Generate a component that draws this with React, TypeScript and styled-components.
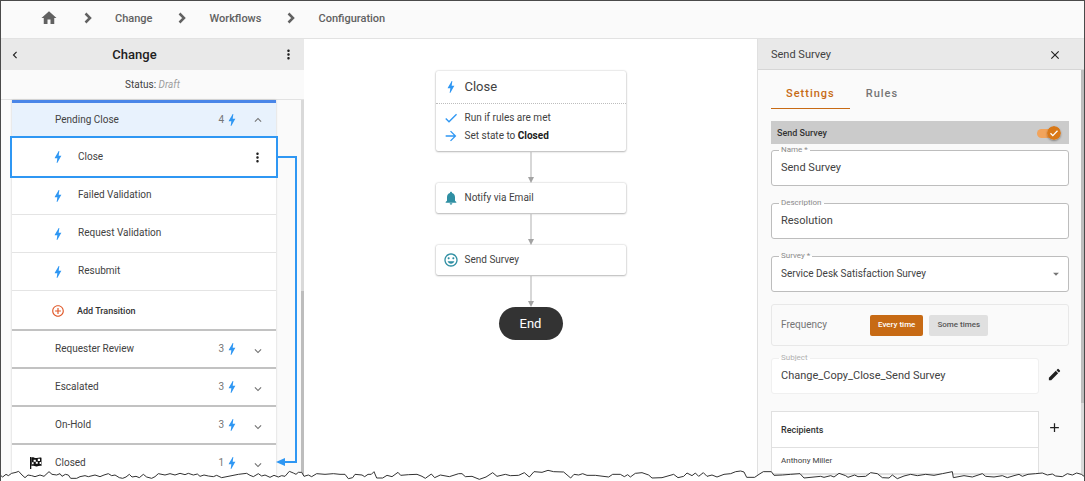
import React, { useState } from "react";
import styled, { createGlobalStyle, css } from "styled-components";
import {
  MdAdd,
  MdArrowDropDown,
  MdArrowForward,
  MdBolt,
  MdCheck,
  MdChevronLeft,
  MdClose,
  MdControlPoint,
  MdEdit,
  MdHome,
  MdKeyboardArrowDown,
  MdKeyboardArrowUp,
  MdMoreVert,
  MdNotifications,
  MdOutlineMood,
} from "react-icons/md";

const blue = "#2f97f3";
const orange = "#c76a14";

const GlobalStyle = createGlobalStyle`
  *, *::before, *::after { box-sizing: border-box; }
  body {
    margin: 0;
    background: #fff;
    color: #424242;
    font-family: Roboto, "Liberation Sans", sans-serif;
    font-size: 10px;
    line-height: 16px;
  }
  button, input, select { font: inherit; color: inherit; }
  button { cursor: pointer; }
  svg { display: block; flex: none; }
`;

/* ---------- shell ---------- */

const Shell = styled.div`
  position: relative;
  display: flex;
  flex-direction: column;
  height: 100vh;
  overflow: hidden;
  border: 1px solid #4a4a4a;
  border-bottom: 0;
`;

const TopBar = styled.nav`
  flex: none;
  height: 38px;
  padding: 0 0 1px 39px;
  background: #fafafa;
  border-bottom: 1px solid #e2e2e2;
`;

const Crumbs = styled.ol`
  display: flex;
  align-items: center;
  height: 100%;
  margin: 0;
  padding: 0;
  list-style: none;
`;

const Crumb = styled.li`
  display: flex;
  align-items: center;
`;

const CrumbLink = styled.a`
  color: #616161;
  font-size: 11px;
  font-weight: 500;
  text-decoration: none;

  svg { margin-bottom: 3px; }
`;

const CrumbSep = styled.svg`
  margin: 0 23px 3px 26px;
`;

const Columns = styled.main`
  flex: 1;
  display: grid;
  grid-template-columns: 303px minmax(0, 1fr) 327px;
  min-height: 0;
`;

const IconButton = styled.button`
  display: flex;
  align-items: center;
  justify-content: center;
  width: 20px;
  height: 20px;
  padding: 0;
  border: 0;
  background: none;
  color: #212121;
`;

/* ---------- left panel ---------- */

const Sidebar = styled.aside`
  display: flex;
  flex-direction: column;
  min-height: 0;
  background: #fafafa;
`;

const SidebarHeader = styled.header`
  flex: none;
  display: flex;
  align-items: center;
  height: 31px;
  padding: 0 6px 0 4px;
  background: #e9e9e9;
`;

const SidebarTitle = styled.h1`
  flex: 1;
  margin: 0;
  padding-right: 34px;
  color: #212121;
  font-size: 13px;
  font-weight: 500;
  text-align: center;
`;

const StatusLine = styled.p`
  flex: none;
  height: 30px;
  margin: 0;
  border-bottom: 1px solid #e2e2e2;
  line-height: 29px;
  text-align: center;

  em { color: #9e9e9e; }
`;

const ListArea = styled.div`
  position: relative;
  flex: 1;
  min-height: 0;
  padding: 0 28px 0 11px;
`;

const StateList = styled.div`
  position: relative;
  background: #fff;
  box-shadow: 0 0 2px rgba(0, 0, 0, 0.2);
`;

const ScrollTrack = styled.div<{ $start: string; $size: string }>`
  position: absolute;
  top: 0;
  right: 0;
  bottom: 0;
  width: 3px;
  background: #d9d9d9;

  &::after {
    content: "";
    position: absolute;
    top: ${(p) => p.$start};
    right: 0;
    width: 3px;
    height: ${(p) => p.$size};
    background: #bdbdbd;
  }
`;

const StateRow = styled.div<{ $open?: boolean }>`
  display: flex;
  align-items: center;
  height: 38px;
  padding: 0 8px 0 43px;
  border-top: 2px solid #c2c2c2;
  ${(p) =>
    p.$open &&
    css`
      height: 36px;
      border-top: 3px solid #4a86e8;
      background: #e8f2fd;
    `}
`;

const StateName = styled.span`
  flex: 1;
`;

const FlagSlot = styled.span`
  width: 26px;
  margin-left: -26px;
`;

const TransitionCount = styled.span`
  display: flex;
  align-items: center;
  margin-right: 8px;
  color: #757575;

  svg { color: ${blue}; }
`;

const Toggle = styled(IconButton)<{ $closed?: boolean }>`
  padding-top: ${(p) => (p.$closed ? 3 : 0)}px;
  color: #757575;
`;

const TransitionRow = styled.div<{ $selected?: boolean }>`
  display: flex;
  align-items: center;
  gap: 12px;
  height: 38px;
  padding: 0 9px 0 38px;
  border-bottom: 1px solid #e4e4e4;

  > svg { color: ${blue}; }

  ${(p) =>
    p.$selected &&
    css`
      height: 42px;
      margin: 0 -2px -1px;
      border: 2px solid ${blue};
    `}
`;

const TransitionName = styled.span`
  flex: 1;
  padding-bottom: 1px;
`;

const AddTransition = styled.button`
  display: flex;
  align-items: center;
  gap: 12px;
  width: 100%;
  height: 38px;
  padding: 2px 0 0 39px;
  border: 0;
  background: none;
  color: #333;
  font-size: 9px;
  font-weight: 500;

  svg { color: #e0592a; }
`;

const Connector = styled.div`
  position: absolute;
  top: 56px;
  bottom: 18px;
  left: calc(100% + 2px);
  width: 19px;
  border: 2px solid ${blue};
  border-left: 0;
  z-index: 1;
`;

const ConnectorHead = styled.svg`
  position: absolute;
  bottom: -6px;
  left: -2px;
`;

/* ---------- canvas ---------- */

const Canvas = styled.section`
  display: flex;
  flex-direction: column;
  align-items: center;
  padding-top: 32px;
  background: #fff;
`;

const Card = styled.article`
  width: 190px;
  border-radius: 2px;
  background: #fff;
  box-shadow: 0 0 2px rgba(0, 0, 0, 0.25), 0 1px 2px rgba(0, 0, 0, 0.22);
`;

const CardTitle = styled.h2`
  display: flex;
  align-items: center;
  gap: 6px;
  height: 33px;
  margin: 0;
  padding-left: 7px;
  border-bottom: 1px dotted #bdbdbd;
  font-size: 13px;
  font-weight: 400;

  svg { color: ${blue}; }
`;

const CardBody = styled.div`
  padding: 5px 0 6px;
`;

const CardLine = styled.div<{ $tone: string; $tall?: boolean }>`
  display: flex;
  align-items: center;
  gap: 6px;
  height: ${(p) => (p.$tall ? 30 : 18)}px;
  padding-left: 7px;

  svg { color: ${(p) => p.$tone}; }
  strong { color: #212121; font-weight: 700; }
`;

const FlowArrow = styled.svg`
  margin-top: 1px;
`;

const EndNode = styled.div`
  width: 64px;
  height: 33px;
  border-radius: 17px;
  background: #333;
  color: #fff;
  font-size: 13px;
  line-height: 33px;
  text-align: center;
`;

/* ---------- right panel ---------- */

const Inspector = styled.aside`
  position: relative;
  display: flex;
  flex-direction: column;
  min-height: 0;
  border-left: 1px solid #e0e0e0;
  background: #fafafa;
`;

const InspectorHeader = styled.header`
  flex: none;
  display: flex;
  align-items: center;
  justify-content: space-between;
  height: 31px;
  padding: 1px 19px 0 13px;
  border-bottom: 1px solid #d6d6d6;
  background: #e9e9e9;
`;

const InspectorTitle = styled.h2`
  margin: 0;
  font-size: 11px;
  font-weight: 400;
`;

const InspectorBody = styled.form`
  position: relative;
  flex: 1;
  min-height: 0;
  padding: 8px 15px 0 13px;
`;

const Tabs = styled.div`
  display: flex;
  gap: 1px;
  margin-bottom: 12px;
`;

const Tab = styled.button<{ $active?: boolean }>`
  height: 31px;
  padding: 2px 15px 0;
  border: 0;
  border-bottom: 1px solid ${(p) => (p.$active ? orange : "transparent")};
  background: none;
  color: ${(p) => (p.$active ? orange : "#757575")};
  font-size: 11px;
  font-weight: 500;
  letter-spacing: 1px;
`;

const SwitchBar = styled.label`
  display: flex;
  align-items: center;
  justify-content: space-between;
  height: 23px;
  margin-bottom: 6px;
  padding: 0 8px 0 6px;
  background: #cbcbcb;
  color: #333;
  font-size: 9px;
  font-weight: 500;
`;

const SwitchBox = styled.span`
  position: relative;
  display: flex;
  width: 24px;
  height: 14px;

  input {
    appearance: none;
    width: 20px;
    height: 9px;
    margin: 3px 0 0;
    border-radius: 5px;
    background: #f2a45c;
  }

  svg {
    position: absolute;
    top: 0;
    right: 0;
    border-radius: 50%;
    box-shadow: 0 1px 2px rgba(0, 0, 0, 0.35);
    pointer-events: none;
  }
`;

const Field = styled.div<{ $faint?: boolean }>`
  position: relative;
  margin-bottom: 17px;

  input, select {
    display: block;
    width: 100%;
    height: 36px;
    padding: 0 9px;
    border: 1px solid ${(p) => (p.$faint ? "#f0f0f0" : "#bdbdbd")};
    border-radius: 3px;
    outline: 0;
    background: #fff;
    appearance: none;
  }

  input {
    padding-bottom: 1px;
    font-size: 11px;
  }

  > svg {
    position: absolute;
    top: 11px;
    right: 6px;
    color: #757575;
    pointer-events: none;
  }
`;

const FieldLabel = styled.label<{ $faint?: boolean }>`
  position: absolute;
  top: -4px;
  left: 8px;
  padding: 0 2px;
  background: linear-gradient(#fafafa 4px, #fff 4px);
  color: ${(p) => (p.$faint ? "#b0b0b0" : "#8a8a8a")};
  font-size: 8px;
  line-height: 8px;
`;

const Frequency = styled.div`
  display: flex;
  align-items: center;
  gap: 6px;
  height: 42px;
  margin: -5px 0 12px;
  padding-left: 9px;
  border: 1px solid #e8e8e8;
  border-radius: 3px;
  color: #757575;
`;

const FrequencyLabel = styled.span`
  width: 83px;
`;

const Choice = styled.button<{ $active?: boolean }>`
  height: 21px;
  padding: 0 8px;
  border: 0;
  border-radius: 2px;
  background: ${(p) => (p.$active ? orange : "#e0e0e0")};
  color: ${(p) => (p.$active ? "#fff" : "#555")};
  font-size: 8px;
  font-weight: 500;
`;

const WithAction = styled.div`
  display: grid;
  grid-template-columns: minmax(0, 1fr) 30px;
  justify-items: end;

  > :first-child { width: 100%; }
  > button { margin: 6px 5px 0 0; }
`;

const Recipients = styled.table`
  border: 1px solid #e0e0e0;
  border-spacing: 0;
  background: #fff;
  font-size: 8px;
  text-align: left;

  th {
    height: 36px;
    padding: 0 9px;
    border-bottom: 1px solid #e0e0e0;
    color: #333;
    font-size: 9px;
    font-weight: 500;
  }
  td {
    height: 26px;
    padding: 0 9px;
    border-bottom: 1px solid #e0e0e0;
  }
`;

const TornEdge = styled.svg`
  position: absolute;
  right: -1px;
  bottom: 0;
  left: -1px;
  width: calc(100% + 2px);
  height: 20px;
  z-index: 2;
`;

/* ---------- drawings ---------- */

const tornPoints =
  "0,42 8,48 18,40 25,44 35,37 48,34 56,31 66,42 75,50 84,42 95,44 105,47 120,42 132,46 147,32 156,40 170,42 180,38 186,46 196,40 205,42 212,52 230,52 240,47 255,44 265,47 285,42 300,47 312,42 325,38 335,44 345,42 358,50 368,52 378,48 388,40 396,48 408,46 418,50 430,40 440,48 455,52 465,47 475,38 495,42 510,38 525,42 540,37 555,41 565,37 580,42 592,39 600,46 612,42 625,45 640,47 650,43 665,50 690,45 715,40 740,37 750,43 760,47 775,38 785,45 795,42 810,49 822,43 835,48 845,44 855,46 868,31 880,36 888,40 895,34 905,34 912,46 925,42 935,47 950,38 975,40 1000,38 1020,40 1035,40 1045,53 1058,50 1065,40 " +
  "1086,42 1094,47 1104,40 1114,40 1122,32 1130,51 1148,51 1161,43 1176,47 1194,34 1202,43 1226,41 1251,40 1266,46 1276,52 1294,39 1304,50 1321,42 1348,47 1376,38 1386,38 1396,47 1416,46 1438,55 1458,48 1478,35 1491,46 1516,40 1531,44 1556,43 1573,35 1588,48 1602,32 1626,34 1644,28 1661,32 1691,33 1712,51 1722,40 1736,42 1748,38 1761,43 1786,43 1826,48 1838,40 1861,40 1873,47 1883,41 1891,48 1906,37 1926,35 1946,42 1956,51 1986,50 2021,40 2034,50 2051,46 2061,36 2076,44 2086,36 2096,46 2110,35 2121,46 2136,42 2151,48 " +
  "2172,40 2192,38 2207,32 2222,30 2232,33 2240,49 2264,49 2277,40 2290,32 2314,32 2322,43 2347,42 2372,40 2400,38 2412,51 2442,48 2462,46 2472,49 2492,44 2502,48 2517,37 2537,44 2544,49 2564,42 2574,47 2597,46 2612,35 2632,38 2647,50 2667,51 2677,42 2692,53 2712,45 2732,40 2752,44 2777,40 2802,43 2827,38 2857,32 2860,50 2892,44 2917,48 2947,38 2957,46 2982,48 3007,44 3022,50 3042,44 3057,40 3067,46 3084,40 3107,38 3127,36 3142,42 3157,39 3167,45 3187,47 3202,38 3217,42 3230,36 3244,40 3255,48";

const Torn = () => (
  <TornEdge viewBox="0 0 3255 60" preserveAspectRatio="none" aria-hidden="true">
    <polygon points={`${tornPoints} 3255,60 0,60`} fill="#fff" />
    <polyline points={tornPoints} fill="none" stroke="#333" strokeWidth="3" />
  </TornEdge>
);

const Separator = () => (
  <CrumbSep width="8" height="12" viewBox="0 0 8 12" aria-hidden="true">
    <path d="M1.500 1.500 6 6l-4.500 4.500" fill="none" stroke="#616161" strokeWidth="2.500" />
  </CrumbSep>
);

const Arrow = () => (
  <FlowArrow width="8" height="31" viewBox="0 0 8 31" aria-hidden="true">
    <path d="M4 0v26" stroke="#bdbdbd" strokeWidth="1.200" />
    <path d="M1 25h6l-3 6z" fill="#a3a3a3" />
  </FlowArrow>
);

const CheckeredFlag = () => (
  <svg width="14" height="14" viewBox="0 0 14 14" aria-hidden="true">
    <path d="M1 1h1.300v12H1z" fill="#111" />
    <path d="M2.300 1.500c2-.8 3.500.8 5.500.5 1.500-.2 2.800-.7 4.700-.3v8.300c-2-.5-3.200.2-4.700.4-2 .2-3.500-1.200-5.500-.4z" fill="#111" />
    <path d="M4.600 3.800h2.200v2H4.600zM8.800 2.800h2.200v2.200H8.800zM6.800 5.800h2v2h-2zM3 6.200h1.600v2H3zM10.600 6h1.500v2h-1.500z" fill="#fff" />
  </svg>
);

const SwitchThumb = () => (
  <svg width="14" height="14" viewBox="0 0 14 14" aria-hidden="true">
    <circle cx="7" cy="7" r="7" fill="#d97817" />
    <path d="m3.500 7.300 2.300 2.300 4.700-4.900" fill="none" stroke="#fff" strokeWidth="1.300" />
  </svg>
);

/* ---------- data ---------- */

const transitions = ["Close", "Failed Validation", "Request Validation", "Resubmit"];

const states = [
  { name: "Requester Review", count: 3 },
  { name: "Escalated", count: 3 },
  { name: "On-Hold", count: 3 },
  { name: "Closed", count: 1, final: true },
];

const crumbs = ["Change", "Workflows", "Configuration"];

export default function App() {
  const [frequency, setFrequency] = useState("Every time");

  return (
    <>
      <GlobalStyle />
      <Shell>
        <TopBar aria-label="Breadcrumb">
          <Crumbs>
            <Crumb>
              <CrumbLink href="#home" aria-label="Home">
                <MdHome size={18} />
              </CrumbLink>
            </Crumb>
            {crumbs.map((name) => (
              <Crumb key={name}>
                <Separator />
                <CrumbLink href={`#${name.toLowerCase()}`}>{name}</CrumbLink>
              </Crumb>
            ))}
          </Crumbs>
        </TopBar>

        <Columns>
          <Sidebar>
            <SidebarHeader>
              <IconButton aria-label="Back">
                <MdChevronLeft size={14} />
              </IconButton>
              <SidebarTitle>Change</SidebarTitle>
              <IconButton aria-label="Workflow menu">
                <MdMoreVert size={15} />
              </IconButton>
            </SidebarHeader>
            <StatusLine>
              Status: <em>Draft</em>
            </StatusLine>
            <ListArea>
              <StateList>
                <StateRow $open>
                  <StateName>Pending Close</StateName>
                  <TransitionCount>
                    4<MdBolt size={16} />
                  </TransitionCount>
                  <Toggle aria-label="Collapse Pending Close">
                    <MdKeyboardArrowUp size={14} />
                  </Toggle>
                </StateRow>
                {transitions.map((name, i) => (
                  <TransitionRow key={name} $selected={i === 0}>
                    <MdBolt size={16} />
                    <TransitionName>{name}</TransitionName>
                    {i === 0 && (
                      <IconButton aria-label="Close transition menu">
                        <MdMoreVert size={15} />
                      </IconButton>
                    )}
                  </TransitionRow>
                ))}
                <AddTransition>
                  <MdControlPoint size={14} />
                  Add Transition
                </AddTransition>
                {states.map((s) => (
                  <StateRow key={s.name}>
                    {s.final && (
                      <FlagSlot>
                        <CheckeredFlag />
                      </FlagSlot>
                    )}
                    <StateName>{s.name}</StateName>
                    <TransitionCount>
                      {s.count}
                      <MdBolt size={16} />
                    </TransitionCount>
                    <Toggle $closed aria-label={`Expand ${s.name}`}>
                      <MdKeyboardArrowDown size={14} />
                    </Toggle>
                  </StateRow>
                ))}
                <Connector>
                  <ConnectorHead width="9" height="10" viewBox="0 0 9 10" aria-hidden="true">
                    <path d="M0 5 9 1v8z" fill={blue} />
                  </ConnectorHead>
                </Connector>
              </StateList>
              <ScrollTrack $start="50%" $size="50%" />
            </ListArea>
          </Sidebar>

          <Canvas>
            <Card>
              <CardTitle>
                <MdBolt size={16} />
                Close
              </CardTitle>
              <CardBody>
                <CardLine $tone={blue}>
                  <MdCheck size={16} />
                  Run if rules are met
                </CardLine>
                <CardLine $tone={blue}>
                  <MdArrowForward size={16} />
                  <span>
                    Set state to <strong>Closed</strong>
                  </span>
                </CardLine>
              </CardBody>
            </Card>
            <Arrow />
            <Card>
              <CardLine $tone="#2f8fa3" $tall>
                <MdNotifications size={16} />
                Notify via Email
              </CardLine>
            </Card>
            <Arrow />
            <Card>
              <CardLine $tone="#2f8fa3" $tall>
                <MdOutlineMood size={16} />
                Send Survey
              </CardLine>
            </Card>
            <Arrow />
            <EndNode>End</EndNode>
          </Canvas>

          <Inspector>
            <InspectorHeader>
              <InspectorTitle>Send Survey</InspectorTitle>
              <IconButton aria-label="Close panel">
                <MdClose size={14} />
              </IconButton>
            </InspectorHeader>
            <InspectorBody onSubmit={(e) => e.preventDefault()}>
              <Tabs role="tablist">
                <Tab type="button" role="tab" aria-selected $active>
                  Settings
                </Tab>
                <Tab type="button" role="tab" aria-selected={false}>
                  Rules
                </Tab>
              </Tabs>
              <SwitchBar>
                Send Survey
                <SwitchBox>
                  <input type="checkbox" role="switch" defaultChecked />
                  <SwitchThumb />
                </SwitchBox>
              </SwitchBar>
              <Field>
                <input id="name" defaultValue="Send Survey" />
                <FieldLabel htmlFor="name">Name *</FieldLabel>
              </Field>
              <Field>
                <input id="description" defaultValue="Resolution" />
                <FieldLabel htmlFor="description">Description</FieldLabel>
              </Field>
              <Field>
                <select id="survey">
                  <option>Service Desk Satisfaction Survey</option>
                </select>
                <MdArrowDropDown size={14} />
                <FieldLabel htmlFor="survey">Survey *</FieldLabel>
              </Field>
              <Frequency role="group" aria-label="Frequency">
                <FrequencyLabel>Frequency</FrequencyLabel>
                {["Every time", "Some times"].map((f) => (
                  <Choice
                    key={f}
                    type="button"
                    aria-pressed={f === frequency}
                    $active={f === frequency}
                    onClick={() => setFrequency(f)}
                  >
                    {f}
                  </Choice>
                ))}
              </Frequency>
              <WithAction>
                <Field $faint>
                  <input id="subject" defaultValue="Change_Copy_Close_Send Survey" />
                  <FieldLabel htmlFor="subject" $faint>
                    Subject
                  </FieldLabel>
                </Field>
                <IconButton type="button" aria-label="Edit subject">
                  <MdEdit size={15} />
                </IconButton>
              </WithAction>
              <WithAction>
                <Recipients>
                  <thead>
                    <tr>
                      <th scope="col">Recipients</th>
                    </tr>
                  </thead>
                  <tbody>
                    <tr>
                      <td>Anthony Miller</td>
                    </tr>
                  </tbody>
                </Recipients>
                <IconButton type="button" aria-label="Add recipient">
                  <MdAdd size={15} />
                </IconButton>
              </WithAction>
              <ScrollTrack $start="0" $size="81%" />
            </InspectorBody>
          </Inspector>
        </Columns>
        <Torn />
      </Shell>
    </>
  );
}
